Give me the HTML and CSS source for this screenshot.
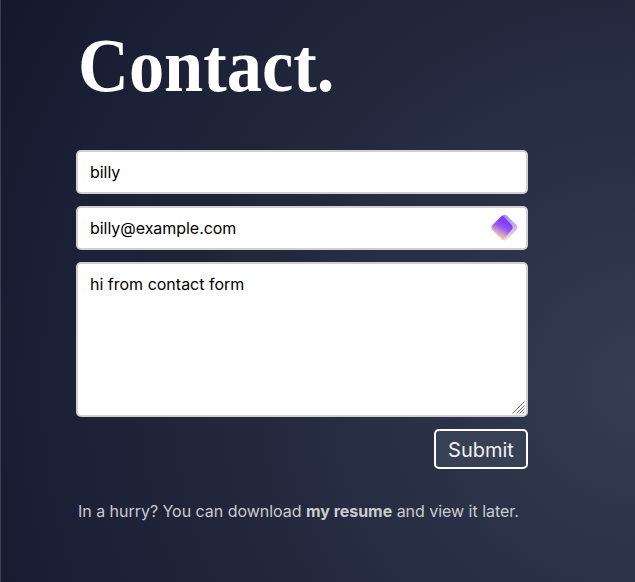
FILE: index.html
```html
<!DOCTYPE html>
<html lang="en">
<head>
<meta charset="utf-8">
<title>Contact</title>
<link rel="stylesheet" href="styles.css">
</head>
<body>
<main class="contact">
  <h1 class="title"><span class="title-text">Contact.</span></h1>
  <form class="form">
    <input class="field" type="text" value="billy" aria-label="Name">
    <div class="field-wrap">
      <input class="field" type="text" value="billy@example.com" aria-label="Email">
      <svg class="badge" viewBox="0 0 28 28" aria-hidden="true">
        <defs>
          <linearGradient id="front" x1="0.75" y1="0" x2="0.25" y2="1">
            <stop offset="0.25" stop-color="#7d3cff"/>
            <stop offset="0.5" stop-color="#9a5cf0"/>
            <stop offset="0.85" stop-color="#f2c9b0"/>
          </linearGradient>
          <linearGradient id="back" x1="0.5" y1="0" x2="0.5" y2="1">
            <stop offset="0" stop-color="#aa82f4"/>
            <stop offset="0.5" stop-color="#cdb4f2"/>
            <stop offset="1" stop-color="#f8dfd0"/>
          </linearGradient>
        </defs>
        <path fill="url(#back)" d="M11.4 1.8Q14 -.3 16.6 1.8L26.4 11.4Q28.4 14 26.4 16.6L16.6 26.4Q14 28.5 11.4 26.4L1.6 16.6Q-.4 14 1.6 11.4Z"/>
        <path fill="url(#front)" d="M11.2 2.2Q12.3 1.6 13.4 2.8L21.4 11.4Q23.6 14 21.4 16.6L13 26.6Q12 27 11.4 26.4L1.6 16.6Q-.4 14 1.6 11.4Z"/>
      </svg>
    </div>
    <div class="field-wrap">
      <textarea class="field message" aria-label="Message">hi from contact form</textarea>
      <svg class="grip" viewBox="0 0 13 13" aria-hidden="true">
        <path d="M.5 12.5l12-12M4.5 12.5l8-8M7.5 12.5l5-5M10.5 12.5l2-2"/>
      </svg>
    </div>
    <button class="submit" type="button">Submit</button>
  </form>
  <p class="note">In a hurry? You can download <strong>my resume</strong> and view it later.</p>
</main>
</body>
</html>
```
FILE: styles.css
```css
* { box-sizing: border-box; }

body {
  margin: 0;
  height: 582px;
  overflow: hidden;
  border-left: 1px solid #3b3f52;
  background: radial-gradient(circle 740px at 640px 385px, #353d53 0%, #293046 33%, #22273c 55%, #1b2036 80%, #15182d 100%);
  font-family: Inter, "Liberation Sans", sans-serif;
}

.contact {
  width: 527px;
  padding: 24px 0 0 75px;
}

.title {
  margin: 0 0 40px;
  height: 86px;
  padding-left: 2px;
  font: bold 77px/83px "Liberation Serif", serif;
  color: #fff;
}

.title-text {
  display: inline-block;
  transform: scaleX(0.915);
  transform-origin: left;
}

.form {
  display: flex;
  flex-direction: column;
  gap: 12px;
}

.field-wrap {
  position: relative;
  display: flex;
}

.field {
  display: block;
  width: 100%;
  height: 44px;
  margin: 0;
  padding: 0 12px;
  border: 2px solid #d0d0d0;
  border-radius: 5px;
  background: #fff;
  color: #000;
  font: 16px/20px Inter, sans-serif;
  letter-spacing: -0.04px;
  outline: 0;
}

.message {
  height: 155px;
  padding-top: 10px;
  letter-spacing: 0;
  resize: none;
}

.badge {
  position: absolute;
  top: 8px;
  right: 10px;
  width: 27px;
  height: 27px;
}

.grip {
  position: absolute;
  right: 3px;
  bottom: 3px;
  width: 13px;
  height: 13px;
  fill: none;
  stroke: #777;
}

.submit {
  align-self: flex-end;
  width: 94px;
  height: 40px;
  padding: 2px 0 0;
  border: 2px solid #fff;
  border-radius: 5px;
  background: #374055;
  color: #f0f1f4;
  font: 20px/24px Inter, sans-serif;
}

.note {
  margin: 32px 0 0 2px;
  color: #c9cbd1;
  font-size: 16px;
  line-height: 20px;
  letter-spacing: -0.03px;
  white-space: nowrap;
}
```
